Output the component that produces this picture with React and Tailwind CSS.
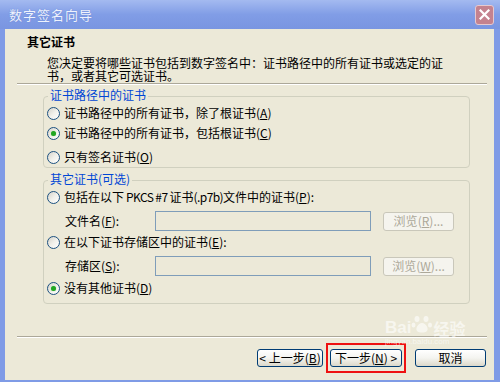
import React from 'react';

const font = "font-['Noto_Sans_CJK_SC','Liberation_Sans',sans-serif]";

function Radio({ checked }) {
  return (
    <span className="w-[13px] h-[13px] rounded-full border border-[#1c5180] bg-gradient-to-br from-[#d4d2ca] via-[#f1f0ea] to-white flex items-center justify-center shrink-0">
      {checked && <span className="w-[5px] h-[5px] rounded-full bg-[#22a622] shadow-[0_0_1px_#7fd07f]" />}
    </span>
  );
}

function Option({ checked, children, className = '' }) {
  return (
    <div className={`flex items-center gap-[4px] h-[16px] ${className}`}>
      <Radio checked={checked} />
      <span className="leading-[16px] whitespace-nowrap">{children}</span>
    </div>
  );
}

function Key({ k }) {
  return (
    <span>
      (<u className="underline-offset-1">{k}</u>)
    </span>
  );
}

function PathRow({ label, k, browseKey, className = '' }) {
  return (
    <div className={`flex items-center h-[20px] pl-[18px] ${className}`}>
      <span className="w-[90px] whitespace-nowrap leading-[16px]">
        {label}<Key k={k} />:
      </span>
      <div className="w-[216px] h-[20px] border border-[#7f9db9] bg-[#ece9d8]" />
      <div className="ml-[12px] w-[71px] h-[19px] border border-[#c9c7ba] rounded-[3px] bg-[#f5f4ee] text-[#aca899] flex items-center justify-center">
        浏览<Key k={browseKey} />...
      </div>
    </div>
  );
}

function Button({ children, className = '' }) {
  return (
    <div className={`h-[18px] border border-[#003c74] rounded-[3px] bg-gradient-to-b from-white via-[#f4f4f0] to-[#dcd8ca] flex items-center justify-center whitespace-nowrap ${className}`}>
      {children}
    </div>
  );
}

export default function App() {
  return (
    <div className={`relative w-[500px] h-[382px] bg-[#7f9be6] flex flex-col text-[12px] text-black ${font}`}>
      {/* Title bar */}
      <div className="h-[29px] shrink-0 flex items-center justify-between pl-[9px] pr-[6px] bg-gradient-to-b from-[#a4baf0] via-[#819de6] to-[#7995e1]">
        <span className="text-[13px] text-[#eef2fd] tracking-[1px] [text-shadow:0_0_1px_#5c7ccd]">数字签名向导</span>
        <div className="w-[19px] h-[20px] rounded-[3px] border border-[#e6c9cf] bg-[#c4828f] flex items-center justify-center">
          <svg width="11" height="11" viewBox="0 0 11 11">
            <path d="M1.5 1.5 L9.5 9.5 M9.5 1.5 L1.5 9.5" stroke="#fff" strokeWidth="2.2" strokeLinecap="square" />
          </svg>
        </div>
      </div>

      {/* Body */}
      <div className="flex-1 ml-[5px] mr-[6px] mb-[2px] bg-[#ece9d8] flex flex-col">
        <div className="pt-[6px] pl-[22px] font-bold leading-[14px]">其它证书</div>
        <div className="mt-[7px] pl-[42px] leading-[13px]">
          您决定要将哪些证书包括到数字签名中：证书路径中的所有证书或选定的证
          <br />
          书，或者其它可选证书。
        </div>
        <div className="mt-[1px] ml-[12px] mr-[7px] border-t border-[#aca899] border-b border-b-white" />

        <fieldset className="mt-[3px] ml-[38px] mr-[24px] border border-[#d0d0bf] rounded-[4px] pl-[3px] pb-[2px]">
          <legend className="ml-[1px] px-[2px] pb-[3px] leading-[14px] text-[#0046d5]">证书路径中的证书</legend>
          <Option>证书路径中的所有证书，除了根证书<Key k="A" /></Option>
          <Option checked className="mt-[4px]">证书路径中的所有证书，包括根证书<Key k="C" /></Option>
          <Option className="mt-[8px]">只有签名证书<Key k="O" /></Option>
        </fieldset>

        <fieldset className="mt-[4px] ml-[38px] mr-[24px] border border-[#d0d0bf] rounded-[4px] pl-[3px] pb-[7px]">
          <legend className="ml-[1px] px-[2px] pb-[3px] leading-[14px] text-[#0046d5]">其它证书(可选)</legend>
          <Option>
            包括在以下<span className="tracking-[-0.6px]"> PKCS #7 </span>证书<span className="tracking-[-0.6px]">(.p7b)</span>文件中的证书<Key k="P" />:
          </Option>
          <PathRow label="文件名" k="F" browseKey="R" className="mt-[6px]" />
          <Option className="mt-[3px]">在以下证书存储区中的证书<Key k="E" />:</Option>
          <PathRow label="存储区" k="S" browseKey="W" className="mt-[6px]" />
          <Option checked className="mt-[4px]">没有其他证书<Key k="D" /></Option>
        </fieldset>

        <div className="mt-[32px] ml-[12px] mr-[7px] border-t border-[#aca899] border-b border-b-white" />

        <div className="mt-[11px] pr-[8px] flex justify-end">
          <Button className="w-[66px]">&lt;&nbsp;上一步<Key k="B" /></Button>
          <div className="relative ml-[7px]">
            <Button className="w-[72px]">下一步<Key k="N" />&nbsp;&gt;</Button>
            <span className="absolute -left-[4px] -right-[4px] -top-[6px] -bottom-[6px] border-2 border-[#ee1111]" />
          </div>
          <Button className="ml-[13px] w-[71px]">取消</Button>
        </div>
      </div>

      {/* watermark */}
      <div className="absolute left-[385px] top-[314px] text-white/60 leading-none pointer-events-none">
        <div className="flex items-end">
          <span className="text-[17px] font-bold font-['Liberation_Sans',sans-serif]">Bai</span>
          <svg width="22" height="20" viewBox="0 0 22 20" className="mb-[2px]">
            <g fill="rgba(255,255,255,0.6)">
              <ellipse cx="6" cy="5" rx="2.5" ry="3" />
              <ellipse cx="15" cy="5" rx="2.5" ry="3" />
              <ellipse cx="2.5" cy="11" rx="2" ry="2.5" />
              <ellipse cx="19" cy="11" rx="2" ry="2.5" />
              <path d="M11 9 C7 9 4 15 6 17 C8 19 14 19 16 17 C18 15 15 9 11 9 Z" />
            </g>
          </svg>
          <span className="text-[16px] font-bold">经验</span>
        </div>
        <div className="text-[8px] mt-[2px] font-['Liberation_Sans',sans-serif]">jingyan.baidu.com</div>
      </div>
    </div>
  );
}
